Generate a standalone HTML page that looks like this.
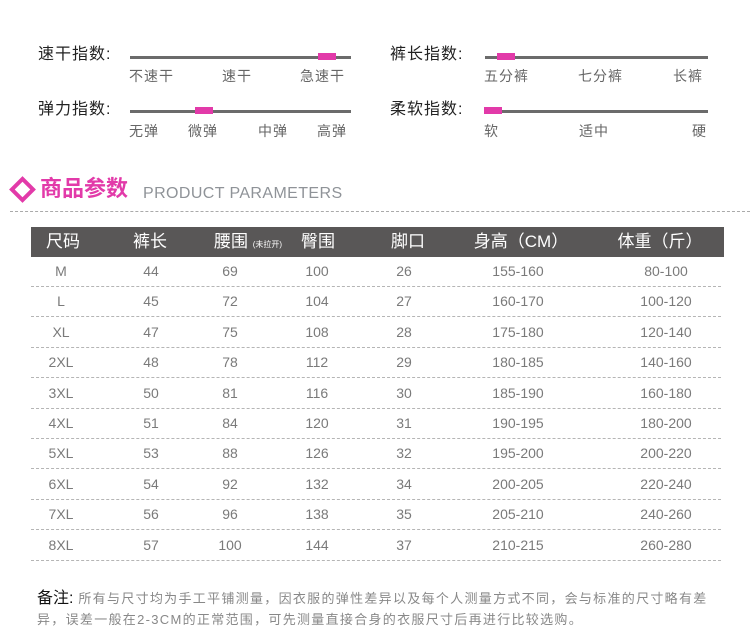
<!DOCTYPE html><html><head><meta charset="utf-8"><style>
body{margin:0;width:750px;height:644px;background:#fff;position:relative;overflow:hidden;font-family:"Liberation Sans","Noto Sans CJK SC",sans-serif}
.a{position:absolute;white-space:nowrap}
.lbl{font-size:16px;color:#222;letter-spacing:1px;line-height:20px}
.sub{font-size:14px;color:#666;line-height:18px;letter-spacing:1px}
.ln{position:absolute;height:3px;background:#6b6b6b}
.pk{position:absolute;height:7px;width:18px;background:#e23aa9}
.c{position:absolute;transform:translateX(-50%);white-space:nowrap}
.hd{font-size:17px;color:#fff;line-height:30px}
.td{font-size:14px;color:#7a7a7a;line-height:20px}
.sep{position:absolute;left:31px;width:690px;border-top:1px dashed #b5b5b5}
.nt{font-size:13px;color:#888;line-height:21px;letter-spacing:1.3px}
</style></head><body>
<div class="a lbl" style="left:38px;top:45px">速干指数:</div>
<div class="ln" style="left:130px;top:56px;width:221px"></div><div class="pk" style="left:318px;top:53px"></div>
<div class="a sub" style="left:129px;top:67px">不速干</div><div class="a sub" style="left:222px;top:67px">速干</div><div class="a sub" style="left:300px;top:67px">急速干</div>
<div class="a lbl" style="left:38px;top:100px">弹力指数:</div>
<div class="ln" style="left:130px;top:110px;width:221px"></div><div class="pk" style="left:195px;top:107px"></div>
<div class="a sub" style="left:129px;top:122px">无弹</div><div class="a sub" style="left:188px;top:122px">微弹</div><div class="a sub" style="left:258px;top:122px">中弹</div><div class="a sub" style="left:317px;top:122px">高弹</div>
<div class="a lbl" style="left:390px;top:45px">裤长指数:</div>
<div class="ln" style="left:485px;top:56px;width:223px"></div><div class="pk" style="left:497px;top:53px"></div>
<div class="a sub" style="left:484px;top:67px">五分裤</div><div class="a sub" style="left:578px;top:67px">七分裤</div><div class="a sub" style="left:673px;top:67px">长裤</div>
<div class="a lbl" style="left:390px;top:100px">柔软指数:</div>
<div class="ln" style="left:485px;top:110px;width:223px"></div><div class="pk" style="left:484px;top:107px"></div>
<div class="a sub" style="left:484px;top:122px">软</div><div class="a sub" style="left:579px;top:122px">适中</div><div class="a sub" style="left:692px;top:122px">硬</div>

<div class="a" style="left:13px;top:180px;width:11px;height:11px;border:4px solid #e23aa9;transform:rotate(45deg)"></div>
<div class="a" style="left:40px;top:175px;font-size:22px;font-weight:bold;color:#e23aa9;line-height:28px">商品参数</div>
<div class="a" style="left:143px;top:183px;font-size:16px;color:#8f9398;line-height:22px;letter-spacing:0.4px">PRODUCT PARAMETERS</div>
<div class="a" style="left:10px;top:211px;width:740px;border-top:1px dashed #aaa"></div>

<div class="a" style="left:31px;top:227px;width:693px;height:30px;background:#595757"></div>
<div class="c hd" style="left:63px;top:227px">尺码</div>
<div class="c hd" style="left:150px;top:227px">裤长</div>
<div class="c hd" style="left:248px;top:227px">腰围 <span style="font-size:8px">(未拉开)</span></div>
<div class="c hd" style="left:318px;top:227px">臀围</div>
<div class="c hd" style="left:408px;top:227px">脚口</div>
<div class="c hd" style="left:521px;top:227px">身高（CM）</div>
<div class="c hd" style="left:660px;top:227px">体重（斤）</div>
<div class="c td" style="left:61px;top:261px">M</div><div class="c td" style="left:151px;top:261px">44</div><div class="c td" style="left:230px;top:261px">69</div><div class="c td" style="left:317px;top:261px">100</div><div class="c td" style="left:404px;top:261px">26</div><div class="c td" style="left:518px;top:261px">155-160</div><div class="c td" style="left:666px;top:261px">80-100</div><div class="sep" style="top:286px"></div>
<div class="c td" style="left:61px;top:291px">L</div><div class="c td" style="left:151px;top:291px">45</div><div class="c td" style="left:230px;top:291px">72</div><div class="c td" style="left:317px;top:291px">104</div><div class="c td" style="left:404px;top:291px">27</div><div class="c td" style="left:518px;top:291px">160-170</div><div class="c td" style="left:666px;top:291px">100-120</div><div class="sep" style="top:316px"></div>
<div class="c td" style="left:61px;top:322px">XL</div><div class="c td" style="left:151px;top:322px">47</div><div class="c td" style="left:230px;top:322px">75</div><div class="c td" style="left:317px;top:322px">108</div><div class="c td" style="left:404px;top:322px">28</div><div class="c td" style="left:518px;top:322px">175-180</div><div class="c td" style="left:666px;top:322px">120-140</div><div class="sep" style="top:347px"></div>
<div class="c td" style="left:61px;top:352px">2XL</div><div class="c td" style="left:151px;top:352px">48</div><div class="c td" style="left:230px;top:352px">78</div><div class="c td" style="left:317px;top:352px">112</div><div class="c td" style="left:404px;top:352px">29</div><div class="c td" style="left:518px;top:352px">180-185</div><div class="c td" style="left:666px;top:352px">140-160</div><div class="sep" style="top:377px"></div>
<div class="c td" style="left:61px;top:383px">3XL</div><div class="c td" style="left:151px;top:383px">50</div><div class="c td" style="left:230px;top:383px">81</div><div class="c td" style="left:317px;top:383px">116</div><div class="c td" style="left:404px;top:383px">30</div><div class="c td" style="left:518px;top:383px">185-190</div><div class="c td" style="left:666px;top:383px">160-180</div><div class="sep" style="top:408px"></div>
<div class="c td" style="left:61px;top:413px">4XL</div><div class="c td" style="left:151px;top:413px">51</div><div class="c td" style="left:230px;top:413px">84</div><div class="c td" style="left:317px;top:413px">120</div><div class="c td" style="left:404px;top:413px">31</div><div class="c td" style="left:518px;top:413px">190-195</div><div class="c td" style="left:666px;top:413px">180-200</div><div class="sep" style="top:438px"></div>
<div class="c td" style="left:61px;top:443px">5XL</div><div class="c td" style="left:151px;top:443px">53</div><div class="c td" style="left:230px;top:443px">88</div><div class="c td" style="left:317px;top:443px">126</div><div class="c td" style="left:404px;top:443px">32</div><div class="c td" style="left:518px;top:443px">195-200</div><div class="c td" style="left:666px;top:443px">200-220</div><div class="sep" style="top:468px"></div>
<div class="c td" style="left:61px;top:474px">6XL</div><div class="c td" style="left:151px;top:474px">54</div><div class="c td" style="left:230px;top:474px">92</div><div class="c td" style="left:317px;top:474px">132</div><div class="c td" style="left:404px;top:474px">34</div><div class="c td" style="left:518px;top:474px">200-205</div><div class="c td" style="left:666px;top:474px">220-240</div><div class="sep" style="top:499px"></div>
<div class="c td" style="left:61px;top:504px">7XL</div><div class="c td" style="left:151px;top:504px">56</div><div class="c td" style="left:230px;top:504px">96</div><div class="c td" style="left:317px;top:504px">138</div><div class="c td" style="left:404px;top:504px">35</div><div class="c td" style="left:518px;top:504px">205-210</div><div class="c td" style="left:666px;top:504px">240-260</div><div class="sep" style="top:529px"></div>
<div class="c td" style="left:61px;top:535px">8XL</div><div class="c td" style="left:151px;top:535px">57</div><div class="c td" style="left:230px;top:535px">100</div><div class="c td" style="left:317px;top:535px">144</div><div class="c td" style="left:404px;top:535px">37</div><div class="c td" style="left:518px;top:535px">210-215</div><div class="c td" style="left:666px;top:535px">260-280</div><div class="sep" style="top:560px"></div>

<div class="a nt" style="left:37px;top:588px"><span style="font-size:16px;color:#111;letter-spacing:0">备注:</span> 所有与尺寸均为手工平铺测量，因衣服的弹性差异以及每个人测量方式不同，会与标准的尺寸略有差</div>
<div class="a nt" style="left:37px;top:609px">异，误差一般在2-3CM的正常范围，可先测量直接合身的衣服尺寸后再进行比较选购。</div>
</body></html>
